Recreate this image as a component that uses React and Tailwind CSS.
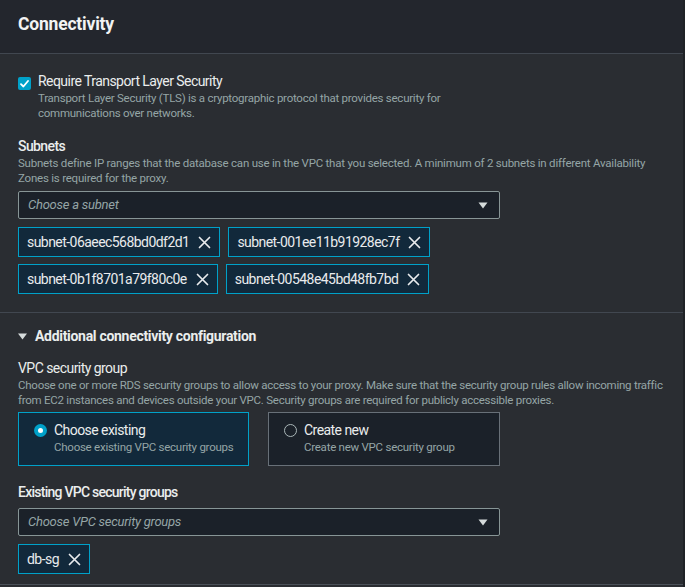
import React from "react";

const Caret = () => (
  <svg width="10" height="7" viewBox="0 0 10 7" className="shrink-0">
    <path d="M0.5 0.5 H9.5 L5 6.5 Z" fill="#d5dbdb" />
  </svg>
);

const XIcon = () => (
  <svg width="13" height="13" viewBox="0 0 13 13" className="shrink-0">
    <path d="M1.5 1.5 L11.5 11.5 M11.5 1.5 L1.5 11.5" stroke="#e9ebed" strokeWidth="1.7" strokeLinecap="round" />
  </svg>
);

const Token = ({ label }) => (
  <div className="flex items-center h-[30px] pl-[8px] pr-[8px] gap-[9px] bg-[#12293b] border border-[#00a1c9] text-[14px] text-[#e9ebed] tracking-[-0.55px]">
    <span>{label}</span>
    <XIcon />
  </div>
);

const Select = ({ placeholder }) => (
  <div className="w-[482px] h-[28px] flex items-center justify-between pl-[9px] pr-[11px] bg-[#1b2129] border border-[#879596] rounded-[2px]">
    <span className="italic text-[13px] text-[#95a5a6] tracking-[-0.25px]">{placeholder}</span>
    <Caret />
  </div>
);

export default function App() {
  return (
    <div className="w-[685px] h-[587px] overflow-hidden bg-[#2a2d32] font-['Roboto',sans-serif] text-[#d5dbdb] border-r-2 border-[#1f2226]">
      <div className="h-[54px] bg-[#23262d] border-b border-[#414750] px-[18px] pt-[13px]">
        <h2 className="text-[17.5px] leading-[22px] font-bold text-[#f2f3f3] tracking-[-0.2px]">Connectivity</h2>
      </div>

      <div className="px-[18px] pt-[18px] pb-[18px] border-b border-[#414750]">
        <div className="flex gap-[7px]">
          <div className="mt-[5px] w-[13px] h-[13px] rounded-[2px] bg-[#00a1c9] flex items-center justify-center shrink-0">
            <svg width="9" height="8" viewBox="0 0 9 8">
              <path d="M1 4.2 L3.4 6.5 L8 1" stroke="#fff" strokeWidth="1.8" fill="none" strokeLinecap="round" strokeLinejoin="round" />
            </svg>
          </div>
          <div>
            <div className="text-[14px] leading-[18px] text-[#eaeded] tracking-[-0.55px]">Require Transport Layer Security</div>
            <div className="text-[11.5px] leading-[15px] text-[#95a5a6] tracking-[-0.25px] w-[420px] mt-[1px]">
              Transport Layer Security (TLS) is a cryptographic protocol that provides security for communications over networks.
            </div>
          </div>
        </div>

        <div className="mt-[16px] text-[14px] leading-[19px] font-medium text-[#eaeded] tracking-[-0.6px]">Subnets</div>
        <div className="text-[11.5px] leading-[15px] text-[#95a5a6] tracking-[-0.22px] w-[645px]">
          Subnets define IP ranges that the database can use in the VPC that you selected. A minimum of 2 subnets in different Availability Zones is required for the proxy.
        </div>
        <div className="mt-[5px]">
          <Select placeholder="Choose a subnet" />
        </div>
        <div className="mt-[8px] flex flex-col gap-[7px]">
          <div className="flex gap-[8px]">
            <Token label="subnet-06aeec568bd0df2d1" />
            <Token label="subnet-001ee11b91928ec7f" />
          </div>
          <div className="flex gap-[8px]">
            <Token label="subnet-0b1f8701a79f80c0e" />
            <Token label="subnet-00548e45bd48fb7bd" />
          </div>
        </div>
      </div>

      <div className="px-[18px] pt-[13px] pb-[10px] border-b border-[#4a5058]">
        <div className="flex items-center gap-[8px] text-[14px] leading-[20px] font-bold text-[#eaeded] tracking-[-0.3px]">
          <svg width="9" height="7" viewBox="0 0 9 7">
            <path d="M0 0.5 H9 L4.5 6.5 Z" fill="#d5dbdb" />
          </svg>
          <span>Additional connectivity configuration</span>
        </div>

        <div className="mt-[13px] text-[14px] leading-[19px] text-[#eaeded] tracking-[-0.55px]">VPC security group</div>
        <div className="text-[11.5px] leading-[15px] text-[#95a5a6] tracking-[-0.25px] w-[660px]">
          Choose one or more RDS security groups to allow access to your proxy. Make sure that the security group rules allow incoming traffic from EC2 instances and devices outside your VPC. Security groups are required for publicly accessible proxies.
        </div>

        <div className="mt-[4px] flex gap-[19px]">
          <div className="w-[231px] h-[54px] bg-[#12293b] border border-[#00a1c9] flex items-start pl-[15px] pt-[8px] gap-[7px]">
            <div className="mt-[3px] w-[13px] h-[13px] rounded-full bg-[#00a1c9] flex items-center justify-center shrink-0">
              <div className="w-[5px] h-[5px] rounded-full bg-white" />
            </div>
            <div>
              <div className="text-[14px] leading-[18px] text-[#eaeded] tracking-[-0.55px]">Choose existing</div>
              <div className="text-[11.5px] leading-[17px] text-[#95a5a6] tracking-[-0.25px]">Choose existing VPC security groups</div>
            </div>
          </div>
          <div className="w-[232px] h-[54px] bg-[#1b2129] border border-[#687078] flex items-start pl-[15px] pt-[8px] gap-[7px]">
            <div className="mt-[3px] w-[13px] h-[13px] rounded-full border border-[#aab7b8] shrink-0" />
            <div>
              <div className="text-[14px] leading-[18px] text-[#eaeded] tracking-[-0.55px]">Create new</div>
              <div className="text-[11.5px] leading-[17px] text-[#95a5a6] tracking-[-0.25px]">Create new VPC security group</div>
            </div>
          </div>
        </div>

        <div className="mt-[17px] text-[14px] leading-[18px] font-medium text-[#eaeded] tracking-[-0.75px]">Existing VPC security groups</div>
        <div className="mt-[7px]">
          <Select placeholder="Choose VPC security groups" />
        </div>
        <div className="mt-[8px] flex">
          <Token label="db-sg" />
        </div>
      </div>
    </div>
  );
}
